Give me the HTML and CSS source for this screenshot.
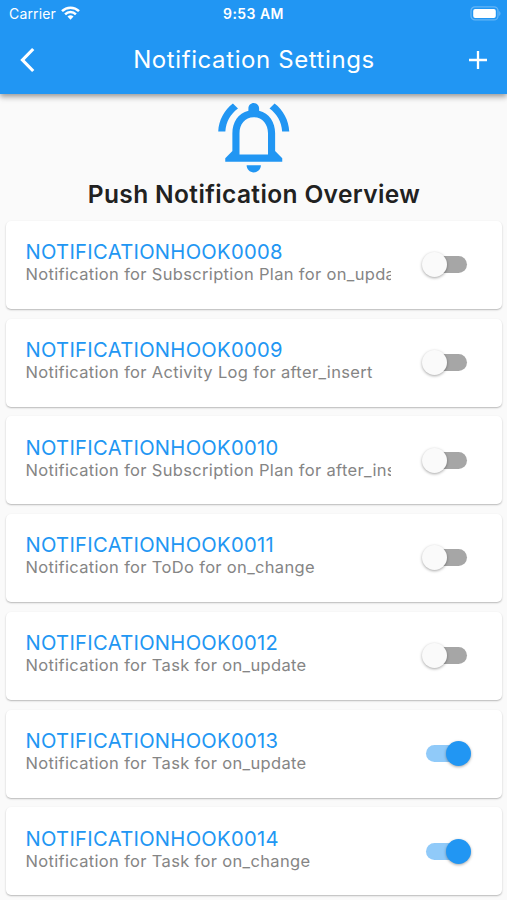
FILE: index.html
```html
<!DOCTYPE html>
<html lang="en">
<head>
<meta charset="utf-8">
<title>Notification Settings</title>
<link rel="stylesheet" href="styles.css">
</head>
<body>
<header class="appbar">
  <div class="status">
    <div class="carrier"><span>Carrier</span>
      <svg width="19" height="14" viewBox="0 0 19 14" fill="none" stroke="#fff" stroke-width="2.5"><path d="M1 5.1a12.2 12.2 0 0 1 17 0"/><path d="M4.1 8.3a7.7 7.7 0 0 1 10.8 0"/><path d="M9.5 13.7 6.5 10.6a4.3 4.3 0 0 1 6 0z" fill="#fff" stroke="none"/></svg>
    </div>
    <div class="time">9:53 AM</div>
    <svg class="battery" width="31" height="15" viewBox="0 0 31 15"><rect x="1" y=".9" width="27" height="13" rx="4" fill="#2196f3" stroke="#64b5f6" stroke-width="1.3"/><rect x="3.2" y="2.9" width="22.6" height="9" rx="2" fill="#fff"/><path d="M29.2 5v5q1.3-.8 1.3-2.5T29.2 5z" fill="#64b5f6"/></svg>
  </div>
  <div class="toolbar">
    <svg class="back" width="20" height="26" viewBox="0 0 20 26" fill="none" stroke="#fff" stroke-width="3.2"><path d="M15.2 2 4.5 13l10.7 11"/></svg>
    <h1><span>Notification Settings</span></h1>
    <svg class="add" width="18" height="18" viewBox="0 0 18 18" stroke="#fff" stroke-width="2.3"><path d="M0 9h18M9 0v18"/></svg>
  </div>
</header>
<main>
  <svg class="bell" viewBox="0 0 24 24" fill="#2196f3"><path d="M7.58 4.08 6.15 2.65C3.75 4.48 2.17 7.3 2.03 10.5h2c.15-2.65 1.51-4.97 3.55-6.42zM19.97 10.5h2c-.15-3.2-1.73-6.02-4.12-7.85l-1.42 1.43c2.02 1.45 3.39 3.77 3.54 6.42zM18 11c0-3.07-1.64-5.64-4.5-6.32V4c0-.83-.67-1.5-1.5-1.5s-1.5.67-1.5 1.5v.68C7.63 5.36 6 7.92 6 11v5l-2 2v1h16v-1l-2-2v-5zm-2 6H8v-6c0-2.48 1.51-4.5 4-4.5s4 2.02 4 4.5v6zM12 22c1.1 0 2-.9 2-2h-4c0 1.1.9 2 2 2z"/></svg>
  <h2><span>Push Notification Overview</span></h2>
  <section class="list">
    <article class="card"><div class="text"><h3>NOTIFICATIONHOOK0008</h3><p>Notification for Subscription Plan for on_update</p></div><i class="switch"></i></article>
    <article class="card"><div class="text"><h3>NOTIFICATIONHOOK0009</h3><p>Notification for Activity Log for after_insert</p></div><i class="switch"></i></article>
    <article class="card"><div class="text"><h3>NOTIFICATIONHOOK0010</h3><p>Notification for Subscription Plan for after_insert</p></div><i class="switch"></i></article>
    <article class="card"><div class="text"><h3>NOTIFICATIONHOOK0011</h3><p>Notification for ToDo for on_change</p></div><i class="switch"></i></article>
    <article class="card"><div class="text"><h3>NOTIFICATIONHOOK0012</h3><p>Notification for Task for on_update</p></div><i class="switch"></i></article>
    <article class="card"><div class="text"><h3>NOTIFICATIONHOOK0013</h3><p>Notification for Task for on_update</p></div><i class="switch on"></i></article>
    <article class="card"><div class="text"><h3>NOTIFICATIONHOOK0014</h3><p>Notification for Task for on_change</p></div><i class="switch on"></i></article>
  </section>
</main>
</body>
</html>
```
FILE: styles.css
```css
* { box-sizing: border-box; margin: 0; padding: 0; }
html, body { height: 100%; overflow: hidden; }
body { background: #fafafa; font-family: Inter, "Liberation Sans", sans-serif; display: flex; flex-direction: column; }
.appbar { position: relative; flex: none; height: 94px; background: #2196f3; color: #fff; box-shadow: 0 2px 5px rgba(0,0,0,.28), 0 4px 6px rgba(0,0,0,.15); }
.status { display: grid; grid-template-columns: 1fr auto 1fr; align-items: center; height: 27px; padding: 0 9px; }
.carrier { display: flex; align-items: center; gap: 5px; font-size: 14px; letter-spacing: .15px; }
.carrier svg { margin-top: -1px; }
.time { font-size: 14px; font-weight: 600; letter-spacing: .45px; }
.battery { justify-self: end; margin-right: -3px; }
.toolbar { display: grid; grid-template-columns: 60px 1fr 60px; align-items: center; height: 66px; }
.back { margin-left: 18px; }
.add { justify-self: end; margin-right: 20.5px; }
h1 { padding-left: 1px; font-size: 24px; font-weight: 400; letter-spacing: .6px; line-height: 30px; text-align: center; white-space: nowrap; }
main { flex: none; display: flex; flex-direction: column; }
.bell { width: 85.5px; height: 85.5px; align-self: center; }
h2 { height: 29px; line-height: 29px; padding-left: 1px; color: #212121; font-size: 24.5px; font-weight: 600; letter-spacing: .38px; text-align: center; white-space: nowrap; }
.list { display: flex; flex-direction: column; gap: 9.75px; padding: 12.4px 5px 0 6px; }
.card { height: 88px; display: flex; justify-content: space-between; padding: 19.2px 35px 0 19.5px; background: #fff; border-radius: 5px; box-shadow: 0 1px 2px rgba(0,0,0,.22), 0 1px 1px rgba(0,0,0,.06); }
.text { width: 365.5px; overflow: hidden; }
h3 { color: #2196f3; font-size: 20.2px; font-weight: 400; line-height: 24px; white-space: nowrap; letter-spacing: .28px; }
p { color: #858585; font-size: 16.5px; line-height: 20px; white-space: nowrap; letter-spacing: .33px; }
.switch { position: relative; flex: none; width: 41px; height: 17px; margin-top: 16px; border-radius: 9px; background: #a6a6a6; }
.switch::after { content: ""; position: absolute; left: -4px; top: -4px; width: 25px; height: 25px; border-radius: 50%; background: #fafafa; box-shadow: 0 1px 3px rgba(0,0,0,.35); }
.switch.on { background: #90caf9; }
.switch.on::after { left: 20px; background: #2196f3; }
```
